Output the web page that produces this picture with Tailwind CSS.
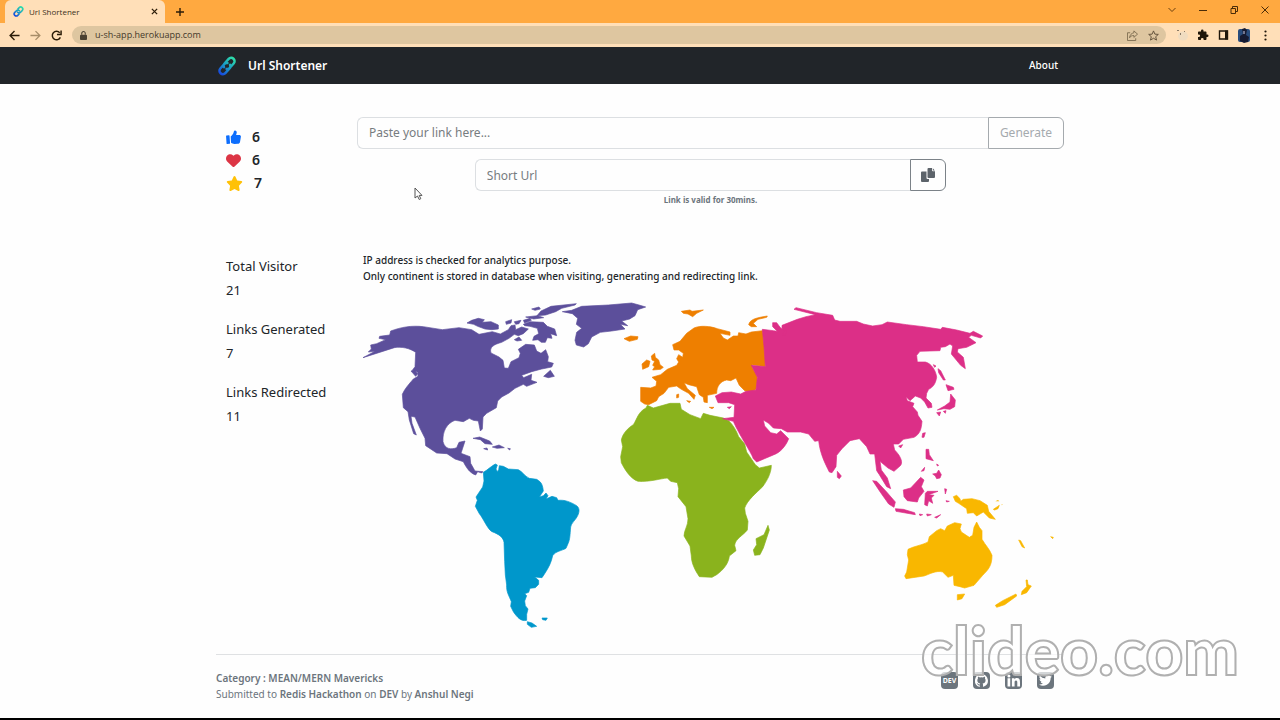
<!DOCTYPE html>
<html lang="en">
  <head>
    <meta charset="UTF-8" />
    <title>Url Shortener</title>
    <meta name="viewport" content="width=device-width, initial-scale=1.0" />
    <script src="https://cdn.jsdelivr.net/npm/@tailwindcss/browser@4"></script>
  </head>
  <body class="relative min-h-screen flex flex-col overflow-x-hidden bg-[#fefefe] border-b-2 border-black font-['Noto_Sans',sans-serif] text-[#212529]">
    <!-- Browser tabs -->
    <div class="flex items-end h-[23px] bg-[#ffa940] pl-[5px] text-[#3d3020]">
      <div class="flex items-center w-40 h-[23px] rounded-t-md bg-[#ffdfb8] pl-2 pr-[3px] font-['Open_Sans',sans-serif] text-[8px]">
        <svg class="size-[11px] mr-[5px]" viewBox="0 0 24 24" fill="none" stroke="url(#chain)" stroke-width="3.5" stroke-linecap="round">
          <path d="M10 13.500a4.500 4.500 0 0 0 6.500 0l3.500-3.500a4.500 4.500 0 0 0-6.400-6.400L11 6.200M14 10.500a4.500 4.500 0 0 0-6.500 0L4 14a4.500 4.500 0 0 0 6.400 6.400l2.600-2.600" />
        </svg>
        <span class="grow">Url Shortener</span>
        <button aria-label="Close tab" class="p-1">
          <svg class="size-[7px]" viewBox="0 0 8 8" stroke="#2b1c08" stroke-width="1.5"><path d="M1 1l6 6M7 1L1 7" /></svg>
        </button>
      </div>
      <button aria-label="New tab" class="self-center ml-[11px]">
        <svg class="size-2" viewBox="0 0 8 8" stroke="#2b1c08" stroke-width="1.4"><path d="M4 0v8M0 4h8" /></svg>
      </button>
      <div class="flex self-center items-center gap-[23px] ml-auto pr-[11px] h-[19px] pb-1">
        <button aria-label="Search tabs"><svg class="size-2" viewBox="0 0 8 8" fill="none" stroke="#6b3f0c"><path d="M.5 2L4 5.500 7.500 2" /></svg></button>
        <button aria-label="Minimize"><svg class="size-2" viewBox="0 0 8 8" stroke="#4a2c08"><path d="M0 4.500h8" /></svg></button>
        <button aria-label="Restore"><svg class="size-2" viewBox="0 0 8 8" fill="none" stroke="#4a2c08"><path d="M1 2.500h4.500v5H1zM2.500 2.500v-2h5v5h-2" /></svg></button>
        <button aria-label="Close"><svg class="size-2" viewBox="0 0 8 8" stroke="#4a2c08"><path d="M.5.5l7 7M7.500.5l-7 7" /></svg></button>
      </div>
    </div>

    <!-- Browser toolbar -->
    <div class="flex items-center h-6 bg-[#ffdfb8] pl-[9px] pr-[9px]">
      <div class="flex items-center gap-[10px]">
        <button aria-label="Back"><svg class="size-[11px]" viewBox="0 0 12 12" fill="none" stroke="#2b1c08" stroke-width="1.500"><path d="M11.500 6H1.500M6 1.200L1.200 6 6 10.800" /></svg></button>
        <button aria-label="Forward"><svg class="size-[11px]" viewBox="0 0 12 12" fill="none" stroke="#a78d68" stroke-width="1.400"><path d="M.5 6h10M6 1.200L10.800 6 6 10.800" /></svg></button>
        <button aria-label="Reload"><svg class="size-[11px]" viewBox="0 0 12 12" fill="none" stroke="#2b1c08" stroke-width="1.600"><path d="M10.200 8A4.600 4.600 0 1 1 9.500 3M11 .5V5H6.500" /></svg></button>
      </div>
      <div class="flex items-center grow h-[18px] ml-[10px] mr-[10px] pl-2 pr-[7px] rounded-full bg-[#dec6a0]">
        <svg class="w-[7px] h-[9px] mr-2" viewBox="0 0 8 10"><path fill="#4c4232" d="M1 4h6a1 1 0 0 1 1 1v4a1 1 0 0 1-1 1H1a1 1 0 0 1-1-1V5a1 1 0 0 1 1-1z" /><path d="M2 4V2.500a2 2 0 0 1 4 0V4" fill="none" stroke="#4c4232" stroke-width="1.200" /></svg>
        <input type="text" aria-label="Address" value="u-sh-app.herokuapp.com" class="grow font-['Open_Sans',sans-serif] text-[9px] leading-4 text-[#44392a] outline-none" />
        <button aria-label="Share"><svg class="size-[11px]" viewBox="0 0 12 12" fill="none" stroke="#7d6c50"><path d="M3.500 3H.5v8.500h9V9M7.500 1l4 3.500-4 3.500V6C5 6 3.500 7 2.800 8.500 3 5.500 4.800 3.500 7.500 3z" /></svg></button>
        <button aria-label="Bookmark" class="ml-[10px]"><svg class="size-[11px]" viewBox="0 0 24 24" fill="none" stroke="#5c4d37" stroke-width="2"><path d="M12 2l3 7 7.500.6-5.700 5 1.800 7.400-6.600-4-6.600 4 1.800-7.400-5.700-5L9 9z" /></svg></button>
      </div>
      <div class="flex items-center gap-[9px]">
        <button aria-label="Extension"><svg class="size-3" viewBox="0 0 12 12"><ellipse cx="7" cy="7" rx="5" ry="4.500" fill="#f0dcc0" /><path d="M1 1h2v1H1zM8 2h1v1H8zM4 4h1v2H4z" fill="#8a7a66" /></svg></button>
        <button aria-label="Extensions"><svg class="size-3" viewBox="0 0 24 24" fill="#1f160a"><path d="M20.500 11H19V7c0-1.100-.9-2-2-2h-4V3.500a2.500 2.500 0 0 0-5 0V5H4c-1.100 0-2 .9-2 2v3.800h1.500a2.700 2.700 0 0 1 0 5.400H2V20c0 1.100.9 2 2 2h3.800v-1.500a2.700 2.700 0 0 1 5.400 0V22H17c1.100 0 2-.9 2-2v-4h1.500a2.500 2.500 0 0 0 0-5z" /></svg></button>
        <button aria-label="Side panel"><svg class="w-[11px] h-3" viewBox="0 0 11 12"><path d="M1.500 2h8v8h-8z" fill="none" stroke="#1f160a" stroke-width="1.400" /><path d="M7 1.500h3v9H7z" fill="#1f160a" /></svg></button>
        <button aria-label="Profile"><svg class="w-3 h-[15px]" viewBox="0 0 12 15"><rect y="1" width="12" height="13" rx="2" fill="#294c7c" /><path d="M4 1l3-1 2 2-1 5 3 2-1 5-4 1-4-2V8l3-2z" fill="#161a30" /><path d="M5 3h2v3H5z" fill="#72758e" /></svg></button>
        <button aria-label="Menu"><svg class="w-3 h-[11px]" viewBox="0 0 12 11" fill="#1f160a"><circle cx="6.500" cy="1.500" r="1.100" /><circle cx="6.500" cy="5.500" r="1.100" /><circle cx="6.500" cy="9.500" r="1.100" /></svg></button>
      </div>
    </div>

    <!-- Navbar -->
    <nav class="bg-[#212529]">
      <div class="flex items-center justify-between w-full max-w-[848px] h-[37px] mx-auto pl-px pr-[6px] text-white">
        <a href="#" class="flex items-center gap-[11px] text-[12px] font-semibold">
          <svg class="size-5" viewBox="0 0 24 24" fill="none" stroke="url(#chain)" stroke-width="3" stroke-linecap="round">
            <defs>
              <linearGradient id="chain" gradientUnits="userSpaceOnUse" x1="20" y1="2" x2="4" y2="22">
                <stop offset="0" stop-color="#2fe0a8" />
                <stop offset=".5" stop-color="#1a9fc4" />
                <stop offset="1" stop-color="#1746e0" />
              </linearGradient>
            </defs>
            <path d="M11.500 15.500a4 4 0 0 0 3.500-1l5-5.500a4 4 0 0 0-6-5.500L9 9a4 4 0 0 0-.6 4.500M12.500 8.500a4 4 0 0 0-3.500 1L4 15a4 4 0 0 0 6 5.500l5-5.500a4 4 0 0 0 .6-4.500" />
          </svg>
          Url Shortener
        </a>
        <a href="#" class="text-[10px] font-medium">About</a>
      </div>
    </nav>

    <main class="flex w-full max-w-[848px] mx-auto pt-[33px]">
      <aside class="shrink-0 w-[141px] pl-[10px]">
        <div class="grid gap-y-px pt-[9px] text-[14px] leading-[22px] font-semibold">
          <button class="flex items-center gap-[11px] text-left" aria-label="Likes">
            <svg class="size-[15px]" viewBox="0 0 512 512" fill="#0d6efd"><path d="M20 190L98 180C112 178 120 186 121 198L138 448C139 462 130 470 118 470L42 478C28 479 20 470 19 458L2 214C1 200 8 192 20 190zM160 220C200 190 240 150 262 80C266 50 274 20 300 16C350 12 372 50 366 92C362 126 350 148 344 170L452 168C484 168 508 190 510 220L480 400C470 446 444 470 404 472L290 474C240 474 210 450 172 434z" /></svg>6
          </button>
          <button class="flex items-center gap-[11px] text-left" aria-label="Hearts">
            <svg class="size-[15px]" viewBox="0 0 512 512" fill="#dc3545"><path d="M47.600 300.400L228.300 469.100c7.500 7 17.400 10.900 27.700 10.900s20.200-3.900 27.700-10.900L464.400 300.400c30.400-28.300 47.600-68 47.600-109.500v-5.800c0-69.900-50.500-129.500-119.400-141C347 36.500 300.600 51.400 268 84L256 96 244 84c-32.600-32.600-79-47.500-124.600-39.900C50.500 55.600 0 115.200 0 185.100v5.800c0 41.500 17.200 81.200 47.600 109.500z" /></svg>6
          </button>
          <button class="flex items-center gap-[11px] text-left" aria-label="Stars">
            <svg class="w-[17px] h-[15px]" viewBox="0 0 576 512" fill="#ffc107"><path d="M316.900 18C311.600 7 300.400 0 288.100 0s-23.400 7-28.800 18L195 150.300 51.400 171.500c-12 1.800-22 10.200-25.700 21.700s-.7 24.200 7.900 32.700L137.800 329 113.200 474.700c-2 12 3 24.200 12.900 31.300s23 8 33.800 2.300l128.300-68.500 128.300 68.500c10.800 5.700 23.900 4.900 33.800-2.300s14.900-19.300 12.900-31.300L438.500 329 542.700 225.900c8.600-8.500 11.700-21.200 7.900-32.700s-13.700-19.900-25.700-21.700L381.200 150.300 316.900 18z" /></svg>7
          </button>
        </div>
        <dl class="mt-[60px] text-[13px] leading-6">
          <dt>Total Visitor</dt>
          <dd class="mb-[15px]">21</dd>
          <dt>Links Generated</dt>
          <dd class="mb-[15px]">7</dd>
          <dt>Links Redirected</dt>
          <dd>11</dd>
        </dl>
      </aside>

      <section class="grow min-w-0">
        <form class="flex h-8">
          <input type="url" aria-label="Link" placeholder="Paste your link here..." class="grow min-w-0 px-[11px] pb-px rounded-l-md border border-r-0 border-[#dcdfe2] text-[12px] placeholder:text-[#777c80] outline-none" />
          <button type="button" class="w-[76px] rounded-r-md border border-[#a5aaae] text-[12px] text-[#a5aaae]">Generate</button>
        </form>
        <div class="flex w-2/3 h-8 mt-[10px] mx-auto">
          <input type="text" aria-label="Short Url" placeholder="Short Url" readonly class="grow min-w-0 px-[11px] pt-px rounded-l-md border border-r-0 border-[#dcdfe2] text-[12px] placeholder:text-[#777c80] outline-none" />
          <button type="button" aria-label="Copy" class="flex items-center justify-center w-9 rounded-r-md border border-[#7b8288]">
            <svg class="size-[14px]" viewBox="0 0 14 14" fill="#5c636a"><path d="M1 3.500h4.500V10a1 1 0 0 0 1 1H8v2a1 1 0 0 1-1 1H1a1 1 0 0 1-1-1V4.500a1 1 0 0 1 1-1z" /><path d="M7.500 0H11v2.500a.8.800 0 0 0 .8.800H14V9a1 1 0 0 1-1 1H7.500a1 1 0 0 1-1-1V1a1 1 0 0 1 1-1zM11.800.2l2 2.200h-2z" /></svg>
          </button>
        </div>
        <p class="mt-px text-center text-[8px] leading-4 font-bold text-[#6c757d]">Link is valid for 30mins.</p>
        <p class="mt-[44px] pl-[6px] text-[10px] leading-4 font-medium">
          IP address is checked for analytics purpose.<br />
          Only continent is stored in database when visiting, generating and redirecting link.
        </p>

        <!-- Continents -->
        <div class="pl-[5px] pr-[8px] mt-[18px]">
          <svg class="block w-full" viewBox="0 0 2082 984" stroke-width="2" stroke-linejoin="round" role="img" aria-label="World map">
            <g fill="#5c4f9b" stroke="#5c4f9b" transform="translate(-21 -21)">
              <path d="M24 188L60 169 40 171 49 162 47 150 65 146 92 134 72 130 74 124 104 120 107 108C140 96 170 91 205 95L262 104 312 98 350 104 372 118 412 110 436 117 460 104 468 92 480 90 482 104 500 96 520 102 505 116 490 122 478 118 462 130 440 142C418 148 402 156 408 174L432 186 444 196 448 219 460 220 468 200 492 188 496 175 490 163 512 148 538 150 545 168 558 175 572 164 580 185 578 200 595 205 590 216 560 222 530 230 500 241 506 248 530 238 528 256 546 262 515 274 505 268 480 280 462 294 440 306 428 318 424 338 395 355 384 366 382 402 376 408 370 378 355 376 343 370 325 380 300 376C275 385 262 410 264 440C270 464 290 464 305 458L312 442 330 438 318 475 345 485 347 505 360 528 384 530 380 534 368 530 362 540C345 534 335 520 325 500L300 492 276 476 245 474 212 452 210 430 195 400 180 366 168 364 171 385 184 420 176 416 163 375 159 350 145 338 142 298C150 280 160 270 175 252L189 244 188 232 172 226 180 215 182 172C165 160 140 154 118 158z" />
              <path d="M336 84L350 76 370 70 388 74 382 82 408 80 430 90 430 102 410 104 390 102 368 94 356 88zM452 80l18-6-2 10-14 4zM478 80l20-4-6 10-10 2zM505 76l20-6 4 6-20 8zM512 66l36-4 18 6-30 4zM530 42l22-6 4 6-16 4zM558 48l30-14 76-8-4 4-40 10-18 10-30 10-26 2zM505 88l20-8 40 2 12 12 22 8 6 20-18-6 4 14-14-2-6 14-12 0-10-8-16 2 4-12 14-8-4-16-22-6-16-2zM478 134l14-8 8 10-14 2zM566 244l20-18 12 18-18 4zM354 430l20-4 30 12 8 10-22-2-14-12zM412 456l20-6 16 8-22 2zM386 461l10-2 2 6zM458 460l8 1-2 4zM168 228l10-2 10 10-6 8z" />
              <path d="M622 50L650 46 680 34 760 30 830 24 852 30 872 36 848 44 840 62 824 72 800 78 818 92 796 88 810 102 770 108 736 112 710 126 700 146 686 156 664 150 660 136 665 112 680 100 664 88 668 70 652 56z" />
            </g>

            <g fill="#0097cb" stroke="#0097cb" transform="translate(294 459)">
              <path d="M70 52C84 44 90 36 106 27L112 30 108 42 112 50 116 44 118 32 130 34 145 42 175 44C190 52 192 62 208 70L230 73C246 82 248 92 250 108L238 126 250 122 258 114 264 122 258 132 276 124 290 128 294 136C314 134 330 140 350 152C362 162 356 176 352 184C346 196 334 204 332 216C330 240 330 254 324 266L318 280C304 288 288 288 278 302C274 322 266 338 254 356L246 368 224 366 236 376 236 388 226 398 210 400 206 412 194 416 200 422 194 438 196 452 204 462 200 478 200 496C184 500 172 488 160 470L152 454 154 440C148 424 138 410 140 390L136 360 134 320 132 262C130 248 118 238 96 230C82 222 70 190 58 176L46 154 52 136 48 126 68 96 72 78z" />
              <path d="M202 500l14 4 14 10-16 3-12-9zM246 489l16 0-4 7-10-2z" />
            </g>

            <g transform="translate(744 -6)">
              <g fill="#ee7f00" stroke="#ee7f00">
                <path d="M92 262L122 264 138 258 140 244 126 232 152 224 172 208 200 196 206 186 200 176 206 164 218 172 220 160 206 150 192 150 188 134 210 124 230 100 252 84C270 76 300 78 322 86L360 96 360 106 330 100 340 114 352 120 370 108 384 108 386 98 408 102 424 96 458 92 464 150 466 200 426 194C426 210 440 216 442 234L440 262C436 276 420 276 404 272L388 256 378 234 362 242 350 240C330 244 320 260 320 280L292 286 292 308 282 306 280 292 268 284 260 260 236 254 222 248 232 266 256 286 252 298 236 280 214 268 200 258 176 262 162 280 146 290 140 302 116 314 104 312 92 304z" />
                <path d="M42 116l20-8 22 2-2 8-24 6zM96 192l14-12 10 4-4 16-18 8zM124 168l10-8 2 12 10 8 4 14 10 8-8 6-24 2 6-10-6-4 6-12-8-4zM214 34l26-4 6 4 34-4-20 10-12 10-14-8-14-2zM416 74C420 60 432 54 472 48L470 52 444 58 430 70 440 80 424 80zM200 284l6-2 0 10-6 2zM230 302l12 2-4 4zM298 322l14 0-6 4z" />
              </g>
              <path fill="#8ab31d" stroke="#8ab31d" d="M112 316L130 324 180 310 210 310 214 328 240 344 272 356 280 340 300 346 340 354 356 362C370 376 378 390 386 410L404 432 410 456 436 494 448 504 484 496C484 520 470 544 458 560C440 578 412 600 404 624L406 640 414 664 412 690C400 706 376 716 374 736L378 752 358 768C356 790 340 810 320 824L306 832 268 830C256 812 244 790 244 768L240 738 222 708C222 690 234 678 234 656L228 620 204 590 206 566 202 548 182 544 172 534C150 536 120 546 84 544C62 536 46 512 34 488L32 470 38 440 34 420C38 400 54 384 70 374C82 356 84 336 108 324zM474 676L478 690 460 744 450 764 434 766 430 750 440 734 438 716 462 704z" />
            </g>

            <g fill="#dc2f87" stroke="#dc2f87" transform="translate(1044 -6)">
              <path d="M157 88L190 92 202 94 188 80 188 68 200 68 212 84 230 92 228 104 216 104 224 94 216 84 216 76 262 58 288 50 316 44 252 28 258 23 320 38 368 46 374 60 390 64 440 64 460 72 488 78 516 74 532 66 590 74 640 80 692 88 697 82 740 90 780 100 790 94 818 108 812 114 784 106 776 112 798 128 770 142 744 146 742 156 760 172 766 206 752 196 724 162 728 138 720 132 706 140 692 142 690 152 630 154 620 166 622 186 646 186C664 190 678 212 680 232C676 254 668 262 656 268L650 280 648 294 664 310 666 322 654 324 644 306 632 294 616 288 600 302 588 290 592 302 612 310 608 320 622 336 624 346 636 364C634 388 630 402 612 412L580 418 566 432 550 432 554 450C574 470 580 490 570 498L552 514 534 504 510 484 514 510 532 534 542 566 530 560 508 524 500 512 494 462 480 462 470 440 448 416 420 422 396 446 380 466 378 500 366 518 358 516C344 488 330 460 326 422L314 424 296 402 272 396 232 396 214 386 190 384 176 370 160 360 164 378 182 398 200 402 212 392 236 416C228 438 210 458 192 464L140 486 130 476C120 450 90 410 70 364L38 356 72 352 74 314 56 308 24 308 16 288 36 278 64 276 92 282 108 274 138 270 142 232 124 196 166 200 162 140z" />
              <path d="M670 194l8 4-4 4zM684 206l8 6 14 28-6 0-14-22zM708 254l22 8 2 6-18 4zM722 282L736 300 734 320 720 328 702 326 682 330 704 318 720 306zM680 338l12-2-4 12zM700 334l8-2-2 8zM638 400l8-2-4 14-6 0zM566 438l12-4-6 10zM648 448L656 448 658 464 670 482 648 476zM680 492l6 4-4 2zM634 514l10-12-2 10zM668 522l12-2 6-10 8 14-4 10-10 2-4-8zM382 514l12 14-6 8-6-4zM488 542L500 544 530 576 556 606 552 622 536 612 512 578zM580 570L602 564 632 532 642 540 634 560 642 574 626 594 622 606 592 602 582 590zM646 580L652 574 684 574 656 584 672 586 664 594 668 610 656 602 652 618 644 614zM704 566l6 2-4 14zM556 626l24 2 34 10 2 6-58-10zM628 642l10 2-8 3zM650 642l14 2-12 4zM674 652l18-8-12 10zM708 602l10 2-8 2zM52 322l12-2-6 6z" />
            </g>

            <g fill="#f9b700" stroke="#f9b700" transform="translate(1494 414)">
              <path d="M144 328C162 318 186 316 204 306L208 290 230 272 242 266 254 272 262 258 284 248 304 252 300 266 304 276 328 292 338 286 342 262 350 246 358 262 366 272 366 298C378 318 388 326 396 346C396 376 386 388 368 406L342 436 314 444 300 440 282 436 280 406 264 412 248 396C228 390 206 404 192 408L138 416 134 408 140 396 146 360 142 344z" />
              <path d="M292 464l22-2-8 14-14 4zM280 170l10-4 10 10 2 8 8-6 26-2 24 6 22 14 4 18 20 24-18-4-18-18-20 12-10-10-18 2-2-14-24-16-10-6zM400 208l12-8 6-4-4 10-10 4zM476 300l6 2 12 22-8-4zM572 290l8 2-2 4zM498 420l4 0 2 14 10 4-14 20-16 6 2-10 14-14zM406 496l22-14 40-20 2 6-36 26-24 8z" />
              <path d="M406 184l8-4 4 4-6 0zM424 194l4-2-2 4z" stroke="none" />
            </g>
          </svg>
        </div>
      </section>
    </main>

    <footer class="flex justify-between w-full max-w-[848px] mx-auto mt-6 pt-[15px] pr-[10px] border-t border-[#dfe1e3] text-[10px] leading-4 text-[#6c757d]">
      <div>
        <p class="font-semibold">Category : MEAN/MERN Mavericks</p>
        <p>Submitted to <b class="font-semibold">Redis Hackathon</b> on <b class="font-semibold">DEV</b> by <b class="font-semibold">Anshul Negi</b></p>
      </div>
      <div class="flex gap-[15px] pt-[2px]">
        <a href="#" aria-label="DEV" class="flex items-center justify-center size-[17px] rounded-sm bg-[#6c757d] text-white text-[7px] font-bold">DEV</a>
        <a href="#" aria-label="GitHub" class="flex items-center justify-center size-[17px] rounded-sm bg-[#6c757d]">
          <svg class="size-[13px]" viewBox="0 0 24 24" fill="#fff"><path d="M12 .3a12 12 0 0 0-3.800 23.400c.6.100.8-.3.800-.6v-2c-3.300.7-4-1.600-4-1.600-.6-1.400-1.400-1.800-1.400-1.800-1-.7.100-.7.100-.7 1.200.1 1.800 1.200 1.800 1.200 1.100 1.800 2.900 1.300 3.500 1 .1-.8.400-1.300.8-1.600-2.700-.3-5.500-1.300-5.500-5.900 0-1.300.5-2.400 1.200-3.200-.1-.3-.5-1.500.1-3.200 0 0 1-.3 3.300 1.200a11.500 11.500 0 0 1 6 0c2.300-1.500 3.300-1.200 3.300-1.200.7 1.700.2 2.900.1 3.200.8.800 1.200 1.900 1.200 3.200 0 4.600-2.800 5.600-5.500 5.900.4.400.8 1.100.8 2.200v3.300c0 .3.200.7.800.6A12 12 0 0 0 12 .3" /></svg>
        </a>
        <a href="#" aria-label="LinkedIn" class="flex items-center justify-center size-[17px] rounded-sm bg-[#6c757d]">
          <svg class="size-[13px]" viewBox="0 0 24 24" fill="#fff"><circle cx="3.500" cy="3.500" r="2.800" /><path d="M1 8h5v15H1zM9 8h4.800v2c1-1.600 2.600-2.400 4.600-2.400 4.200 0 5.600 2.600 5.600 7V23h-5v-7.500c0-2-.4-3.700-2.400-3.700S14 13.500 14 15.400V23H9z" /></svg>
        </a>
        <a href="#" aria-label="Twitter" class="flex items-center justify-center size-[17px] rounded-sm bg-[#6c757d]">
          <svg class="size-[13px]" viewBox="0 0 24 24" fill="#fff"><path d="M24 4.600a10 10 0 0 1-2.900.8 5 5 0 0 0 2.200-2.800c-1 .6-2 1-3.100 1.200a4.900 4.900 0 0 0-8.400 4.500A14 14 0 0 1 1.600 3.200a4.900 4.900 0 0 0 1.600 6.500 4.900 4.900 0 0 1-2.300-.6 4.900 4.900 0 0 0 4 4.900 5 5 0 0 1-2.200.1 4.900 4.900 0 0 0 4.600 3.400A9.900 9.900 0 0 1 0 19.500a14 14 0 0 0 21.500-12.400A10 10 0 0 0 24 4.600z" /></svg>
        </a>
      </div>
    </footer>

    <!-- Watermark -->
    <div class="absolute right-[41px] bottom-[28px] font-['Lato',sans-serif] text-[66px] leading-[80px] font-black text-white/70 [-webkit-text-stroke:2px_#b0b0b0] pointer-events-none">clideo.com</div>

    <!-- Mouse pointer -->
    <svg class="absolute left-[414px] top-[187px] w-[9px] h-[14px] pointer-events-none" viewBox="0 0 9 14" fill="#fff" stroke="#555"><path d="M1 1v10l2.500-2 1.700 3.500 1.600-.8L5.200 8.400H8z" /></svg>
  </body>
</html>
